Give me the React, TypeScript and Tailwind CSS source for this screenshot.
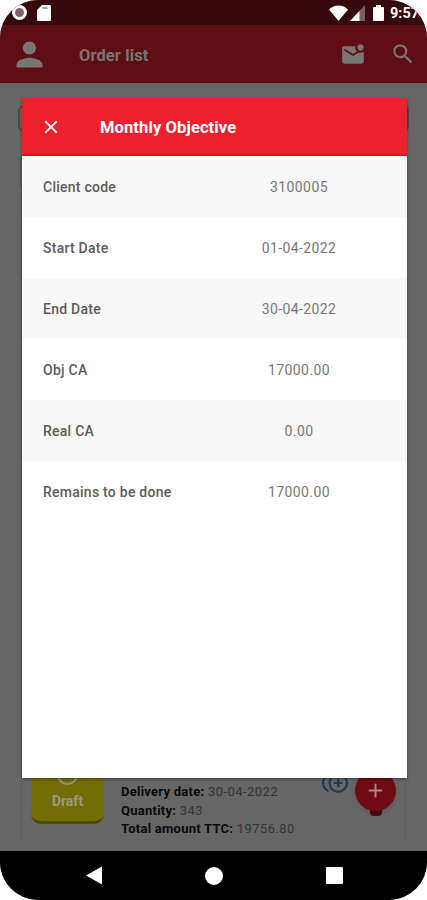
import {
  MdAdd,
  MdClose,
  MdControlPointDuplicate,
  MdMarkEmailUnread,
  MdPerson,
  MdSearch,
} from "react-icons/md"

const objectiveRows = [
  { label: "Client code", value: "3100005" },
  { label: "Start Date", value: "01-04-2022" },
  { label: "End Date", value: "30-04-2022" },
  { label: "Obj CA", value: "17000.00" },
  { label: "Real CA", value: "0.00" },
  { label: "Remains to be done", value: "17000.00" },
]

function StatusBar() {
  return (
    <div className="flex h-[25px] items-center bg-[#38090c] text-white">
      <div className="ml-3 h-[15px] w-[15px] rounded-full border-[3px] border-white bg-[#806065]" />
      <svg className="ml-[10px]" width="14" height="16" viewBox="0 0 14 16" fill="currentColor">
        <path d="M5 0h7.5A1.5 1.5 0 0 1 14 1.5v13a1.5 1.5 0 0 1-1.5 1.5h-11A1.5 1.5 0 0 1 0 14.5V5Z" />
        <path d="M5.5 3h5" stroke="#8d7a7c" strokeWidth="1.3" />
      </svg>
      <div className="flex-1" />
      <svg width="19" height="16" viewBox="0 0 19 16" fill="currentColor">
        <path d="M0 4.5C5.2-.8 13.8-.8 19 4.5L9.5 16Z" />
      </svg>
      <svg className="ml-[2px]" width="16" height="16" viewBox="0 0 16 16" fill="currentColor">
        <path d="M15 0v16H0Z" opacity=".35" />
        <path d="M9.5 6v10H0Z" />
      </svg>
      <svg className="ml-[7px]" width="11" height="16" viewBox="0 0 11 16" fill="currentColor">
        <path d="M3 0h5v2h2a1 1 0 0 1 1 1v12a1 1 0 0 1-1 1H1a1 1 0 0 1-1-1V3a1 1 0 0 1 1-1h2Z" />
      </svg>
      <span className="ml-[6px] w-[37px] pt-[2px] text-[14.5px] leading-[23px] font-bold whitespace-nowrap">
        9:57
      </span>
    </div>
  )
}

function AppBar() {
  return (
    <div className="flex h-[58px] items-center bg-[#5f0c12] text-[#777672]">
      <MdPerson className="ml-[10px] h-[39px] w-[39px]" />
      <h1 className="ml-[30px] pt-[4px] text-[16.5px] font-bold tracking-[0.1px]">Order list</h1>
      <div className="flex-1" />
      <MdMarkEmailUnread className="mt-[2px] h-[26px] w-[26px]" />
      <MdSearch className="mr-[11px] ml-[24px] h-[26px] w-[26px]" />
    </div>
  )
}

function OrderCard() {
  return (
    <div className="mx-[21px] flex h-[78px] border-x border-[#5e5e5e]">
      <div className="ml-[9px] flex h-[60px] w-[73px] flex-col items-center rounded-b-[10px] border-b-[3px] border-[#4e4a08] bg-[#746d05]">
        <div className="h-[21px] w-[21px] shrink-0 rounded-full border-2 border-[#969273]" />
        <span className="mt-[7px] text-[14px] leading-[18px] font-bold text-[#9b9983]">Draft</span>
      </div>
      <div className="ml-[17px] w-[196px] pt-[19px] text-[13px] leading-[18.5px] tracking-[0.25px] whitespace-nowrap text-[#353535]">
        <p>
          <b className="text-[#0a0a0a]">Delivery date:</b> <span className="tracking-[0.45px]">30-04-2022</span>
        </p>
        <p>
          <b className="text-[#0a0a0a]">Quantity:</b> <span className="tracking-[0.45px]">343</span>
        </p>
        <p>
          <b className="text-[#0a0a0a]">Total amount TTC:</b> <span className="tracking-[0.45px]">19756.80</span>
        </p>
      </div>
      <MdControlPointDuplicate className="mt-[6px] ml-[5px] h-[26px] w-[26px] shrink-0 text-[#1c3c59]" />
      <div className="ml-[7px] flex w-[41px] shrink-0 flex-col items-center pt-[6px]">
        <div className="z-10 flex h-[41px] w-[41px] shrink-0 items-center justify-center rounded-full bg-[#700b14] text-[#a58b8c] shadow-md">
          <MdAdd className="h-[23px] w-[23px]" />
        </div>
        <div className="-mt-[2px] h-[7px] w-3 rounded-b-sm bg-[#4b080d]" />
      </div>
    </div>
  )
}

function NavigationBar() {
  return (
    <div className="flex h-[49px] items-center bg-black text-white">
      <svg className="ml-[86px]" width="16" height="19" viewBox="0 0 16 19" fill="currentColor">
        <path d="M0 9.5 16 .5v18Z" />
      </svg>
      <div className="ml-[103px] h-[18px] w-[18px] rounded-full bg-white" />
      <div className="ml-[103px] h-[17px] w-[17px] rounded-[1px] bg-white" />
    </div>
  )
}

function ObjectiveDialog() {
  return (
    <div className="absolute top-[98px] left-[22px] z-20 flex h-[680px] w-[385px] flex-col bg-white shadow-[0_1px_3px_rgba(0,0,0,0.4)]">
      <div className="flex h-[58px] items-center border-b-2 border-[#df1720] bg-[#ec212d] text-white">
        <MdClose className="mt-[2px] ml-[18px] h-[22px] w-[22px]" />
        <h2 className="ml-[38px] pt-[5px] text-[16.5px] font-bold tracking-[0.12px]">Monthly Objective</h2>
      </div>
      {objectiveRows.map((row) => (
        <div key={row.label} className="flex h-[61px] items-center pt-[2px] odd:bg-white even:bg-[#f8f8f8]">
          <span className="w-[169px] pl-[21px] text-[14px] font-medium tracking-[0.25px] whitespace-nowrap text-[#5c5c5c]">
            {row.label}
          </span>
          <span className="w-[216px] text-center text-[14px] tracking-[0.4px] text-[#777]">{row.value}</span>
        </div>
      ))}
    </div>
  )
}

export default function App() {
  return (
    <div className="h-[900px] w-[427px] overflow-hidden bg-white font-['Roboto','Liberation_Sans',sans-serif]">
      <div className="relative flex h-full flex-col overflow-hidden rounded-[38px] bg-[#666]">
        <StatusBar />
        <AppBar />
        <div className="flex flex-1 flex-col pt-[22px]">
          <div className="mx-[18px] h-[27px] rounded-md border-2 border-[#4a4a4a]" />
          <div className="mx-[20px] mt-[22px] h-[36px] rounded-md border border-[#555]" />
          <div className="mx-[21px] flex-1 border-x border-[#5e5e5e]" />
          <OrderCard />
          <div className="h-[9px]" />
        </div>
        <NavigationBar />
        <ObjectiveDialog />
      </div>
    </div>
  )
}
